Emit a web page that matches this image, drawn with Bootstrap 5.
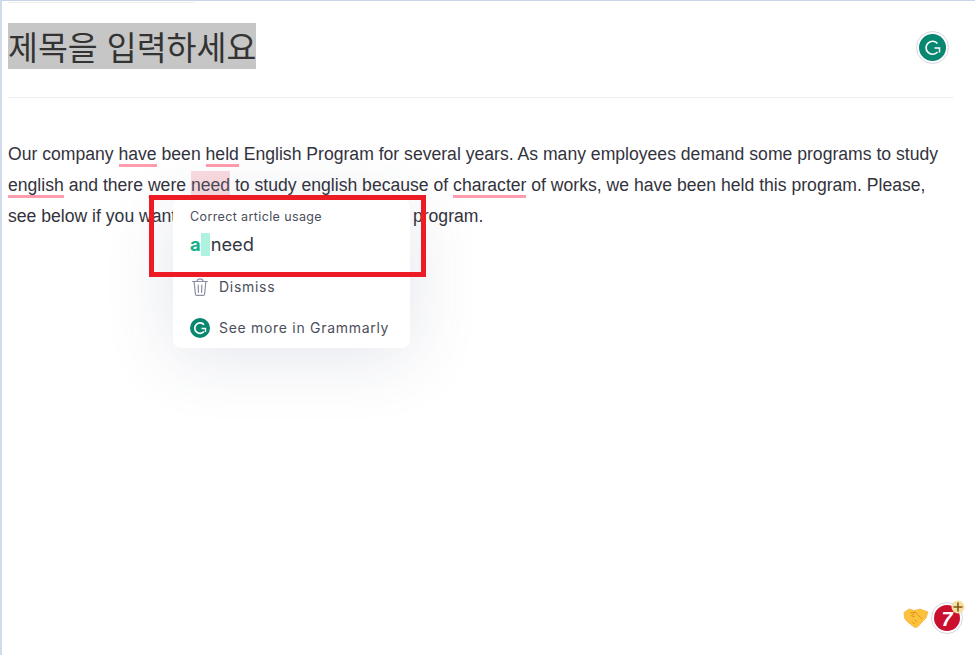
<!DOCTYPE html>
<html lang="ko"><head><meta charset="utf-8">
<link href="https://cdn.jsdelivr.net/npm/bootstrap@5.3.0/dist/css/bootstrap.min.css" rel="stylesheet">
<style>
html,body{height:100%;margin:0;overflow:hidden}
body{background:#fff;border-top:1px solid #c8d5e8;border-left:2px solid #d0dbec;position:relative;font-family:"Liberation Sans",Arial,sans-serif;color:#333}
.tabstub{position:absolute;left:6px;top:-1px;width:187px;height:3px;border:1px solid #eceef0;border-top:0;border-radius:0 0 2px 2px}
.doc-wrap{padding:22px 21px 0 6px}
.doc-head{height:75px;border-bottom:1px solid #eeeff1}
.doc-title{margin:0;display:inline-block;background:#c6c6c6;color:#333;font:400 32.5px/46px "Noto Sans CJK KR","Liberation Sans",sans-serif}
.doc-body{margin:41px 0 0;font-size:17.6px;line-height:31px;color:#33333d;width:945px}
.uline{box-shadow:inset 0 -3px 0 #ff9cae;padding-bottom:3px}
.uline-faint{box-shadow:inset 0 -2px 0 #ffc3ce;padding-bottom:3px}
.hlword{background:#fadbe0;padding:4px 0 3px;color:#4a4a55}
.gbadge{position:absolute;left:914px;top:30px;width:33px;height:33px;border:1px solid #d3d8e2;border-radius:50%;background:#fff;display:flex;align-items:center;justify-content:center}
.popcard{position:absolute;left:171px;top:198px;width:237px;height:149px;background:#fff;border-radius:8px;box-shadow:0 8px 70px rgba(60,70,110,.14);font-family:Inter,"Liberation Sans",sans-serif;padding:9px 17px 0;color:#3e4352}
.pop-label{font-size:12.5px;line-height:18px;letter-spacing:.38px;color:#4a4e5a}
.pop-sug{font-size:18.3px;line-height:24px;margin-top:6px;color:#333743;display:flex}
.pop-a{color:#17b088;font-weight:700}
.pop-gap{background:#aef3e0;width:9px;height:23px;margin-right:1px;margin-top:1px}
.pop-row{display:flex;align-items:center;gap:9px;font-size:14px;letter-spacing:.7px;color:#4b4f5c;position:absolute;left:17px}
.pop-dismiss{top:77px}
.pop-more{top:118px}
.redbox{position:absolute;left:147px;top:194px;width:277px;height:82px;border:5px solid #ed1c24;pointer-events:none}
.cornerfab{position:absolute;left:901px;top:606px}
.counter{position:absolute;left:929px;top:599px}
</style></head>
<body>
<div class="tabstub"></div>
<div class="doc-wrap">
  <div class="doc-head"><h1 class="doc-title">제목을 입력하세요</h1></div>
  <p class="doc-body">Our company <span class="uline">have</span> been <span class="uline">held</span> English Program for several years. As many employees demand some programs to study <span class="uline">english</span> and there <span class="uline-faint">were</span> <span class="hlword">need</span> to study <span class="uline-faint">english</span> because of <span class="uline">character</span> of works, we have been held this program. Please, see below if you want to participate in our language program.</p>
</div>

<div class="gbadge"><svg width="27" height="27" viewBox="0 0 27 27"><circle cx="13.5" cy="13.5" r="13.5" fill="#078670"/><path d="M18.500 9.500A6.500 6.500 0 1 0 18.500 18" fill="none" stroke="#fff" stroke-width="1.700"/><path d="M20.500 18.500v-4.500h-5" fill="none" stroke="#fff" stroke-width="1.500"/></svg></div>

<div class="popcard">
  <div class="pop-label">Correct article usage</div>
  <div class="pop-sug"><span class="pop-a">a</span><span class="pop-gap"></span><span>need</span></div>
  <div class="pop-row pop-dismiss"><svg width="20" height="20" viewBox="0 0 20 20" fill="none" stroke="#8a90a6" stroke-width="1.200" stroke-linecap="round"><path d="M2.500 4.500h15M7 4.500c0-3.500 6-3.500 6 0M4.200 5l1.200 12c.1.900.6 1.400 1.400 1.400h6.400c.8 0 1.300-.5 1.400-1.400L15.800 5M8.200 8l.2 7.500M11.800 8l-.2 7.500"/></svg><span>Dismiss</span></div>
  <div class="pop-row pop-more"><svg width="20" height="20" viewBox="0 0 20 20"><circle cx="10" cy="10" r="10" fill="#078670"/><path d="M14 6.800A5.200 5.200 0 1 0 14 13.500" fill="none" stroke="#fff" stroke-width="1.700"/><path d="M15.500 14v-3.500h-4" fill="none" stroke="#fff" stroke-width="1.400"/></svg><span>See more in Grammarly</span></div>
</div>
<div class="redbox"></div>

<svg class="cornerfab" width="26" height="22" viewBox="0 0 26 22"><path d="M1 5.500l5-3.500 5.500 1.500L17 2l8 3-2 6-7.500 8c-1.500 1.500-3 2-4.500 1L4 14.500 1.500 11z" fill="#fcc23d" stroke="#eda726" stroke-width=".6"/><path d="M7 6l5-1 7 7M12 5L8.500 9c1 1 2.500.8 3.500-.2M14 15l-2.500-2.500M11.500 17L9 14.500" fill="none" stroke="#dd9418" stroke-width="1"/></svg>
<svg class="counter" width="36" height="36" viewBox="0 0 36 36"><circle cx="16" cy="18" r="15.500" fill="#fff" stroke="#d3d8e2"/><circle cx="16" cy="18" r="13" fill="#c9102f"/><text x="16" y="25.500" text-anchor="middle" font-family="Liberation Sans" font-size="20" font-weight="700" font-style="italic" fill="#fff">7</text><circle cx="27" cy="7" r="6.500" fill="#f7dfa3"/><path d="M27 2.500v9M22.500 7h9" stroke="#7d5a12" stroke-width="1.600"/></svg>
</body></html>
